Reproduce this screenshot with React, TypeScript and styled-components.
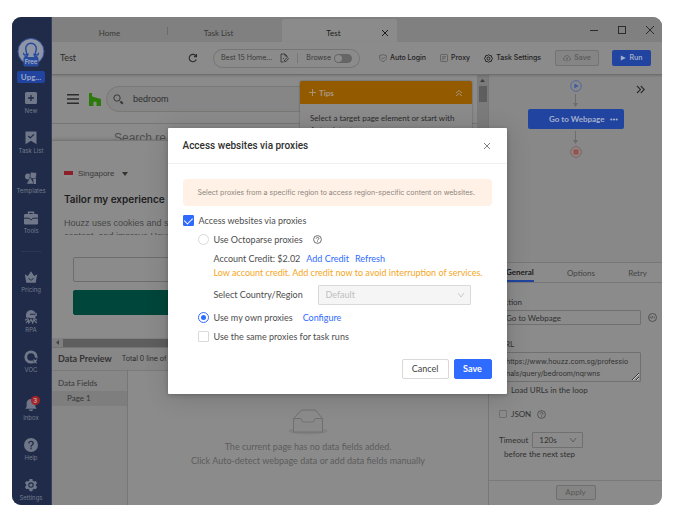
import React from 'react';
import styled, { createGlobalStyle, css } from 'styled-components';

const ui = '"Lato", "Noto Sans", sans-serif';
const small = '"Inter", "Noto Sans", sans-serif';
const site = '"Liberation Sans", Arial, sans-serif';

const c = {
  page: '#8b8b8b',
  bar: '#878787',
  strip: '#808080',
  line: '#787878',
  ink: '#2c2c2c',
  soft: '#454545',
  navy: '#1f2b48',
  navyIcon: '#6f7788',
  blue: '#2044a0',
  orange: '#935a00',
  primary: '#2f6bff',
};

const Global = createGlobalStyle`
  * { box-sizing: border-box; }
  body { margin: 0; background: #fff; font: 9px/12px ${ui}; color: ${c.ink}; }
  button, input, select, textarea { font: inherit; color: inherit; margin: 0; }
  button { cursor: pointer; }
  svg { display: block; flex: none; }
  h1, h2, p { margin: 0; font-weight: inherit; font-size: inherit; }
  a { text-decoration: none; color: inherit; }
`;

const Page = styled.div`
  min-height: 100vh;
  padding: 17px 17px 16px 12px;
  display: grid;
`;
const Window = styled.div`
  position: relative;
  display: grid;
  grid-template-columns: 40px minmax(0, 1fr);
  border-radius: 9px;
  overflow: hidden;
  background: ${c.page};
`;

/* Sidebar */
const Sidebar = styled.nav`
  background: ${c.navy};
  border-right: 1px solid #35405a;
  display: flex;
  flex-direction: column;
  align-items: center;
  gap: 15px;
  padding: 21px 1px 0 0;
  font: 6px/10px ${small};
  color: #737b8c;
`;
const Profile = styled.div`
  display: flex;
  flex-direction: column;
  align-items: center;
  gap: 4px;
  margin-bottom: -7px;
`;
const Upgrade = styled.button`
  border: 0;
  border-radius: 2px;
  background: ${c.blue};
  color: #9aa6c4;
  width: 28px;
  height: 12px;
  padding: 0;
  font: 700 8px/12px ${ui};
`;
const SideLink = styled.a<{ $spaced?: boolean }>`
  position: relative;
  display: flex;
  flex-direction: column;
  align-items: center;
  gap: 1px;
  ${p => p.$spaced && css`margin-top: 8px;`}
`;
const SideRule = styled.hr`
  width: 20px;
  height: 1px;
  border: 0;
  margin: 0 0 3px;
  background: #2b3753;
`;
const Badge = styled.span`
  position: absolute;
  top: -2px;
  right: -1px;
  width: 9px;
  height: 9px;
  border-radius: 50%;
  background: #a62226;
  color: #b9a0a2;
  font: 700 6px/9px ${small};
  text-align: center;
`;

/* Top bars */
const Main = styled.div`
  display: flex;
  flex-direction: column;
  min-width: 0;
`;
const TabBar = styled.header`
  display: flex;
  align-items: stretch;
  height: 25px;
  background: ${c.strip};
  padding-top: 2px;
  font: 8px/23px ${ui};
  color: #333;
`;
const WindowTab = styled.button<{ $active?: boolean }>`
  flex: 0 1 115px;
  display: grid;
  grid-template-columns: 12px 1fr 24px;
  align-items: center;
  justify-items: center;
  border: 0;
  padding: 4px 0 0;
  text-align: center;
  background: ${p => (p.$active ? c.page : 'transparent')};
  border-radius: 3px 3px 0 0;
  color: ${p => (p.$active ? '#1c1c1c' : '#383838')};
  & > span { grid-column: 2; line-height: 16px; }
  &:first-child { grid-template-columns: 22px 1fr 22px; }
`;
const TabSeparator = styled.span`
  width: 1px;
  height: 8px;
  align-self: center;
  margin-right: -1px;
  background: #6a6a74;
`;
const WindowControls = styled.div`
  margin-left: auto;
  display: flex;
  gap: 18px;
  align-items: center;
  padding: 0 7px 2px 0;
`;
const IconButton = styled.button`
  border: 0;
  background: none;
  padding: 0;
  display: grid;
  place-items: center;
  color: #2c2c2c;
`;
const Toolbar = styled.div`
  display: flex;
  align-items: center;
  height: 33px;
  padding: 0 11px 0 8px;
  border-bottom: 1px solid #6f6f6f;
  box-shadow: 0 1px 2px rgba(0, 0, 0, 0.15);
  font: 500 7px/10px ${small};
  white-space: nowrap;
  z-index: 1;
`;
const TaskName = styled.h1`
  flex: 0 1 128px;
  font: 9px/12px ${ui};
`;
const AddressPill = styled.div`
  display: flex;
  align-items: center;
  height: 19px;
  margin-left: 15px;
  padding: 0 7px;
  gap: 8px;
  border: 1px solid #757575;
  border-radius: 10px;
  font-weight: 400;
  color: #383838;
`;
const PillRule = styled.span`
  width: 1px;
  height: 10px;
  background: #777;
`;
const Toggle = styled.label`
  display: flex;
  align-items: center;
  gap: 3px;
`;
const Switch = styled.input`
  appearance: none;
  width: 18px;
  height: 9px;
  border-radius: 5px;
  background: #666;
  border: 1px solid #636363;
  display: flex;
  &::after {
    content: '';
    width: 7px;
    height: 7px;
    border-radius: 50%;
    background: ${c.page};
  }
`;
const ToolbarActions = styled.div`
  margin-left: auto;
  display: flex;
  align-items: center;
`;
const ToolLink = styled.button`
  display: flex;
  align-items: center;
  gap: 3px;
  border: 0;
  background: none;
  padding: 0;
  margin-right: 14px;
  color: #222;
`;
const ToolButton = styled.button<{ $primary?: boolean }>`
  display: flex;
  align-items: center;
  justify-content: center;
  gap: 3px;
  height: 16px;
  padding: 0;
  border-radius: 2px;
  font-weight: 600;
  ${p =>
    p.$primary
      ? css`width: 39px; border: 0; background: ${c.blue}; color: #9fabc8;`
      : css`width: 44px; margin-right: 13px; border: 1px solid #737373; background: #858585; color: #5f5f5f;`}
`;

const Workspace = styled.div`
  flex: 1;
  display: grid;
  grid-template-columns: minmax(0, 1fr) 174px;
`;
const LeftColumn = styled.div`
  display: flex;
  flex-direction: column;
  min-width: 0;
`;

/* Embedded site */
const Browser = styled.section`
  position: relative;
  flex: 1;
  display: grid;
  grid-template-columns: minmax(0, 1fr) 11px;
  grid-template-rows: 1fr 9px;
  font-family: ${site};
`;
const Site = styled.div`
  display: flex;
  flex-direction: column;
`;
const SiteHeader = styled.div`
  display: flex;
  align-items: center;
  gap: 10px;
  height: 49px;
  padding: 0 5px 0 15px;
  border-bottom: 1px solid #767676;
`;
const SearchBox = styled.label`
  flex: 1;
  display: flex;
  align-items: center;
  gap: 9px;
  height: 26px;
  margin-left: -5px;
  padding: 0 6px;
  border: 1px solid #777974;
  border-radius: 13px;
  background: #868686;
`;
const SearchInput = styled.input`
  flex: 1;
  min-width: 0;
  border: 0;
  padding: 0;
  background: none;
  outline: 0;
  color: #2e2e2e;
`;
const SearchHeading = styled.h2`
  height: 16px;
  padding: 7px 0 0 62px;
  overflow: hidden;
  font: 12px/14px ${site};
  color: #505050;
  background: #8b8b8b;
`;
const CookiePanel = styled.div`
  flex: 1;
  padding: 27px 12px 0;
  border-top: 1px solid #767676;
  box-shadow: 0 -1px 3px rgba(0, 0, 0, 0.15);
`;
const Region = styled.button`
  display: flex;
  align-items: center;
  gap: 5px;
  border: 0;
  background: none;
  padding: 0;
  font: 8px/12px ${site};
  color: #3a3a3a;
  & > svg:last-child { margin-left: 3px; }
`;
const CookieTitle = styled.h2`
  margin-top: 12px;
  font: 600 10px/14px ${small};
  color: #1d1d1d;
`;
const CookieText = styled.p`
  margin-top: 11px;
  height: 18px;
  overflow: hidden;
  font: 9px/13px ${site};
  color: #464646;
`;
const CookieActions = styled.div`
  display: grid;
  gap: 8px;
  margin: 22px 9px 0;
`;
const CookieButton = styled.button<{ $filled?: boolean }>`
  height: 25px;
  border-radius: 2px;
  border: 1px solid ${p => (p.$filled ? '#00463a' : '#6d6d6d')};
  background: ${p => (p.$filled ? '#00463a' : 'none')};
`;
const ScrollY = styled.div`
  display: flex;
  flex-direction: column;
  align-items: center;
  gap: 4px;
  padding-top: 4px;
  background: #7b7b7b;
`;
const ScrollX = styled.div`
  grid-column: 1 / -1;
  display: flex;
  align-items: center;
  gap: 4px;
  padding-left: 4px;
  background: #7f7f7f;
`;
const Thumb = styled.span<{ $wide?: boolean }>`
  background: #5e5e5e;
  ${p => (p.$wide ? css`width: 300px; height: 8px;` : css`width: 8px; height: 16px;`)}
`;
const Tips = styled.aside`
  position: absolute;
  top: 6px;
  right: 16px;
  width: 172px;
  border-radius: 2px;
  background: ${c.page};
  box-shadow: 0 0 2px rgba(0, 0, 0, 0.4);
`;
const TipsHead = styled.div`
  display: flex;
  align-items: center;
  gap: 3px;
  height: 23px;
  padding: 0 9px;
  border-radius: 2px 2px 0 0;
  background: ${c.orange};
  color: #a89a80;
  font: 700 8px/12px ${ui};
  & > button { margin-left: auto; color: inherit; }
`;
const TipsText = styled.p`
  padding: 8px 10px;
  font: 8px/12px ${ui};
  color: #2a2a2a;
`;

/* Data preview */
const DataPanel = styled.section`
  display: flex;
  flex-direction: column;
  min-height: 158px;
  border-top: 1px solid #747474;
`;
const DataHead = styled.div`
  display: flex;
  align-items: center;
  gap: 10px;
  height: 23px;
  padding: 0 6px;
  border-bottom: 1px solid #7a7a7a;
  background: ${c.bar};
  font: 7px/12px ${small};
  & > h2 { font: 700 9px/12px ${ui}; color: #333; }
`;
const DataBody = styled.div`
  flex: 1;
  display: grid;
  grid-template-columns: 76px 1fr;
`;
const FieldList = styled.div`
  padding-top: 5px;
  border-right: 1px solid #767676;
  background: #878787;
  font: 8px/14px ${ui};
  color: #363636;
`;
const FieldRow = styled.div<{ $child?: boolean }>`
  height: 15px;
  padding-left: ${p => (p.$child ? 15 : 6)}px;
  background: ${p => (p.$child ? '#7e7e7e' : 'none')};
`;
const Empty = styled.div`
  display: flex;
  flex-direction: column;
  align-items: center;
  padding-top: 38px;
  line-height: 14px;
  text-align: center;
  color: #5c5c5c;
  & > p { margin-top: 5px; }
`;

/* Workflow and step settings */
const SidePanel = styled.aside`
  display: flex;
  flex-direction: column;
  border-left: 1px solid #777;
`;
const Flow = styled.div`
  position: relative;
  flex: 1;
  display: flex;
  flex-direction: column;
  align-items: center;
  gap: 2px;
  padding-top: 5px;
  min-height: 187px;
  background: #888;
`;
const Collapse = styled(IconButton)`
  position: absolute;
  top: 10px;
  right: 17px;
`;
const Step = styled.button`
  display: flex;
  align-items: center;
  justify-content: flex-end;
  gap: 5px;
  width: 96px;
  height: 20px;
  padding: 0 6px;
  border: 0;
  border-radius: 2px;
  background: ${c.blue};
  color: #a5afcb;
  font: 700 8px/12px ${ui};
`;
const StepTabs = styled.div`
  display: flex;
  justify-content: space-between;
  height: 21px;
  padding: 0 15px 0 17px;
  border-top: 1px solid #777;
  border-bottom: 1px solid #777;
`;
const StepTab = styled.button<{ $active?: boolean }>`
  border: 0;
  background: none;
  padding: 0;
  font: ${p => (p.$active ? 700 : 400)} 8px/18px ${ui};
  color: ${p => (p.$active ? '#1c1c1c' : '#444')};
  ${p => p.$active && css`border-bottom: 2px solid ${c.blue};`}
`;
const Form = styled.form`
  display: flex;
  flex-direction: column;
  padding: 13px 5px 0 10px;
  font: 8px/12px ${ui};
  color: #303030;
`;
const InputRow = styled.div`
  display: flex;
  align-items: center;
  justify-content: space-between;
  margin: 2px 0 13px;
`;
const TextInput = styled.input`
  width: 142px;
  height: 15px;
  padding: 0 6px;
  border: 1px solid #707070;
  border-radius: 1px;
  background: none;
`;
const UrlArea = styled.textarea`
  width: 142px;
  height: 30px;
  margin-top: 2px;
  padding: 3px 11px 3px 6px;
  border: 1px solid #707070;
  border-radius: 1px;
  background: none;
  font: 7px/12px ${small};
  word-break: break-all;
  overflow: hidden;
  resize: vertical;
`;
const FormCheck = styled.div<{ $last?: boolean }>`
  display: flex;
  align-items: center;
  gap: 4px;
  margin-top: ${p => (p.$last ? 12 : 2)}px;
  & > label { display: flex; align-items: center; gap: 4px; }
  & > svg { margin-left: 2px; color: #484848; }
`;
const DimCheck = styled.input`
  appearance: none;
  width: 8px;
  height: 8px;
  border: 1px solid #707070;
  border-radius: 1px;
`;
const TimeoutRow = styled.label`
  display: flex;
  align-items: center;
  gap: 4px;
  margin-top: 12px;
`;
const SelectWrap = styled.span<{ $wide?: boolean }>`
  display: grid;
  align-items: center;
  ${p => (p.$wide ? css`width: 153px;` : css`width: 51px;`)}
  & > * { grid-area: 1 / 1; }
  & > svg { justify-self: end; margin-right: 6px; pointer-events: none; color: #505050; }
`;
const DimSelect = styled.select`
  appearance: none;
  height: 16px;
  padding: 0 6px;
  border: 1px solid #707070;
  border-radius: 1px;
  background: none;
`;
const FormNote = styled.p`
  padding-left: 5px;
`;
const FormFoot = styled.div`
  display: grid;
  place-items: center;
  height: 25px;
  margin-top: 20px;
  border-top: 1px solid #7a7a7a;
  padding-bottom: 2px;
`;
const Apply = styled.button`
  width: 40px;
  height: 15px;
  padding: 0;
  border: 1px solid #6f6f6f;
  border-radius: 2px;
  background: #858585;
  color: #585858;
  font: 8px/12px ${ui};
`;

/* Proxy dialog */
const Overlay = styled.div`
  position: absolute;
  inset: 0;
  z-index: 2;
  display: grid;
  place-items: center;
`;
const Dialog = styled.div`
  width: min(339px, 100%);
  background: #fff;
  border-radius: 1px;
  box-shadow: 0 3px 24px rgba(0, 0, 0, 0.16), 0 1px 4px rgba(0, 0, 0, 0.2);
  color: #4d4d4d;
`;
const DialogHead = styled.div`
  display: flex;
  align-items: center;
  justify-content: space-between;
  height: 36px;
  padding: 0 16px 0 15px;
  border-bottom: 1px solid #f0f0f0;
  & > h2 { font: 500 10px/14px "Roboto", ${ui}; color: #303030; }
  & > button { color: #808080; }
`;
const DialogBody = styled.div`
  padding: 15px 15px 0;
`;
const Notice = styled.p`
  height: 27px;
  margin-bottom: 5px;
  padding: 0 15px;
  border-radius: 4px;
  background: #fff1e5;
  font: 7px/28px ${small};
  color: #8c8680;
  white-space: nowrap;
`;
const Option = styled.div<{ $indent?: boolean }>`
  display: flex;
  align-items: center;
  gap: 10px;
  height: 19px;
  padding-left: ${p => (p.$indent ? 15 : 0)}px;
  & > label { display: flex; align-items: center; gap: 5px; }
`;
const Check = styled.input`
  appearance: none;
  display: grid;
  place-content: center;
  width: 11px;
  height: 11px;
  border: 1px solid #d9d9d9;
  border-radius: 1px;
  background: #fff;
  &:checked { background: ${c.primary}; border-color: ${c.primary}; }
  &:checked::after {
    content: '';
    width: 4px;
    height: 7px;
    margin-bottom: 2px;
    border: solid #fff;
    border-width: 0 1px 1px 0;
    transform: rotate(45deg);
  }
`;
const Radio = styled.input`
  appearance: none;
  display: grid;
  place-content: center;
  width: 11px;
  height: 11px;
  border: 1px solid #d9d9d9;
  border-radius: 50%;
  &:checked { border-color: ${c.primary}; }
  &:checked::after {
    content: '';
    width: 5px;
    height: 5px;
    border-radius: 50%;
    background: ${c.primary};
  }
`;
const Credit = styled.div`
  display: flex;
  align-items: center;
  gap: 6px;
  height: 19px;
  padding-left: 31px;
`;
const Link = styled.a`
  color: ${c.primary};
`;
const Warning = styled.p`
  padding-left: 31px;
  line-height: 10px;
  color: #f5a61d;
  white-space: nowrap;
`;
const CountryRow = styled.label`
  display: flex;
  align-items: center;
  justify-content: space-between;
  margin: 7px 0 3px;
  padding: 0 21px 0 31px;
`;
const CountrySelect = styled.select`
  appearance: none;
  height: 20px;
  padding: 0 7px;
  border: 1px solid #d9d9d9;
  border-radius: 1px;
  background: #f5f5f5;
  color: #bfbfbf;
  opacity: 1;
  & + svg { color: #bfbfbf; }
`;
const DialogFoot = styled.div`
  display: flex;
  justify-content: flex-end;
  gap: 5px;
  padding: 13px 15px 15px;
`;
const DialogButton = styled.button<{ $primary?: boolean }>`
  height: 20px;
  padding: 0;
  border-radius: 2px;
  ${p =>
    p.$primary
      ? css`width: 38px; border: 1px solid ${c.primary}; background: ${c.primary}; color: #fff; font-weight: 700;`
      : css`width: 47px; border: 1px solid #d9d9d9; background: #fff; color: #444;`}
`;

/* Icons */
type G = { w: number; h?: number; vb: string; s?: number; fill?: string; color?: string; children: React.ReactNode };
const Svg = ({ w, h = w, vb, s = 1, fill = 'none', color, children }: G) => (
  <svg width={w} height={h} viewBox={vb} fill={fill} stroke={fill === 'none' ? 'currentColor' : 'none'} strokeWidth={s} color={color} aria-hidden="true">
    {children}
  </svg>
);
const Cross = ({ size = 8 }: { size?: number }) => (
  <Svg w={size} vb="0 0 8 8"><path d="M1 1l6 6M7 1l-6 6" /></Svg>
);
const Chevron = () => (
  <Svg w={8} vb="0 0 8 8" s={0.8}><path d="M1 2l3 4 3-4" /></Svg>
);
const HelpMark = () => (
  <Svg w={9} vb="0 0 9 9" s={0.8}>
    <circle cx="4.5" cy="4.5" r="3.9" />
    <path d="M3.2 3.7c0-1.7 2.7-1.7 2.7-.1 0 .9-1.4 1-1.4 2M4.5 6.3v.8" />
  </Svg>
);

const I = (children: React.ReactNode) => (
  <Svg w={14} vb="0 0 14 14" fill={c.navyIcon}>{children}</Svg>
);
const dark = c.navy;
const items = {
  New: I(<><rect x="1" y="1" width="12" height="12" rx="1.5" /><path d="M7 4v6M4 7h6" stroke={dark} strokeWidth="1.3" /></>),
  'Task List': I(<><path d="M1.5.5h11v12.7L7 9.8l-5.5 3.4z" /><path d="M4.3 5l2 2 3.6-3.6" stroke={dark} strokeWidth="1.2" fill="none" /></>),
  Templates: I(<><circle cx="4" cy="5.5" r="3" /><path d="M6.5 1l6.2.8-.8 6.2-6-.8z" stroke={dark} strokeWidth=".6" /><path d="M6.3 6l3.8 7H2.5z" stroke={dark} strokeWidth=".5" /><path d="M9 8h3v5H9.8z" /></>),
  Tools: I(<><path d="M4.5 3.5V1.3h5v2.2" fill="none" stroke={c.navyIcon} strokeWidth="1.4" /><rect x="0" y="3" width="14" height="10.5" rx="1.3" /><path d="M0 7.2h5M9 7.2h5M5.5 7c0 2.3 3 2.3 3 0" fill="none" stroke={dark} /></>),
  Pricing: I(<><path d="M.8 4.2l3 1.9L7 1.2l3.2 4.9 3-1.9-1.5 8.6H2.3z" /><path d="M4.8 8c.5 2.7 3.9 2.7 4.4 0" fill="none" stroke={dark} /></>),
  RPA: I(<><path d="M2 7.5V5a5 5 0 019.4-2.3l1.4.3v3l-1.4.2v2.3z" /><path d="M6 4.3h5.5" stroke={dark} strokeWidth="1.1" /><path d="M2 13l2.5-3.2L4.8 13l2.2-3.7L8.7 13l.8-3.3L12.7 13M1 10.3l3-1.7M13 10.3l-3-1.7" stroke={c.navyIcon} strokeWidth="1.2" fill="none" /></>),
  VOC: I(<><circle cx="7" cy="7" r="5.2" fill="none" stroke={c.navyIcon} strokeWidth="2.8" /><path d="M8 7.6l5 .2-1.6 4.8-2-.5z" fill={dark} /><path d="M9.2 9.3l4.2 1.3-1.5.8 1.2 1.5-1 .8-1.2-1.4-.8 1.3z" /></>),
  Inbox: I(<><path d="M7 1a4.3 4.3 0 014.4 4.4v3.4l1.3 2H1.3l1.3-2V5.4A4.3 4.3 0 017 1zM4.8 11.6h4.4c-.6 2-3.8 2-4.4 0z" /></>),
  Help: I(<><circle cx="7" cy="7" r="7" /><path d="M4.8 5.5c0-2.8 4.4-2.7 4.4-.1 0 1.6-2.2 1.6-2.2 3.3M7 9.6v1.6" fill="none" stroke={dark} strokeWidth="1.3" /></>),
  Settings: I(<><path d="M5.6 1h2.8l.4 1.8 1.2.7 1.8-.6 1.3 2.4-1.3 1.3v1l1.3 1.3-1.3 2.4-1.8-.6-1.2.7-.4 1.8H5.6l-.4-1.8-1.2-.7-1.8.6L.9 8.9l1.3-1.3v-1L.9 5.3l1.3-2.4 1.8.6 1.2-.7z" /><circle cx="7" cy="7.1" r="2.2" fill="none" stroke={dark} strokeWidth="1.1" /></>),
};
type ItemName = keyof typeof items;
const SideItem = ({ name, spaced, badge }: { name: ItemName; spaced?: boolean; badge?: string }) => (
  <SideLink href="#" $spaced={spaced}>
    {items[name]}
    {name}
    {badge && <Badge>{badge}</Badge>}
  </SideLink>
);

const Avatar = () => (
  <svg width="28" height="29" viewBox="0 0 28 29" role="img" aria-label="Free plan">
    <circle cx="14" cy="13.5" r="13" fill="#8e95a5" stroke="#35529a" />
    <path
      d="M9.5 17c.8-1.5-.8-4-.8-6.5a5.3 5.3 0 0110.6 0c0 2.5-1.600 5-.8 6.500M9.500 16.500c-1.800 1.300-3.500-.4-2.700-1.700M18.500 16.500c1.800 1.300 3.500-.4 2.700-1.700M11 15.500c0 2-1.500 3.500-3.500 3.500M17 15.500c0 2 1.500 3.500 3.500 3.500"
      fill="none"
      stroke="#2448a0"
      strokeWidth="1.4"
    />
    <rect x="6.5" y="19" width="15" height="9.5" rx="1.5" fill="#2a4c9e" />
    <text x="14" y="26" textAnchor="middle" fontSize="6" fontWeight="600" fontFamily="Inter, sans-serif" fill="#a3aec8">Free</text>
  </svg>
);

const Arrow = ({ h }: { h: number }) => (
  <Svg w={5} h={h} vb={`0 0 5 ${h}`} color="#6d6d6d">
    <path d={`M2.5 0v${h - 3}`} /><path d={`M0 ${h - 4}h5l-2.5 4z`} fill="#6d6d6d" stroke="none" />
  </Svg>
);

export default function App() {
  return (
    <Page>
      <Global />
      <Window>
        <Sidebar>
          <Profile>
            <Avatar />
            <Upgrade>Upg...</Upgrade>
          </Profile>
          <SideItem name="New" />
          <SideItem name="Task List" />
          <SideItem name="Templates" />
          <SideItem name="Tools" />
          <SideRule />
          <SideItem name="Pricing" />
          <SideItem name="RPA" />
          <SideItem name="VOC" />
          <SideItem name="Inbox" spaced badge="3" />
          <SideItem name="Help" />
          <SideItem name="Settings" />
        </Sidebar>

        <Main>
          <TabBar>
            <WindowTab><span>Home</span></WindowTab>
            <TabSeparator />
            <WindowTab><span>Task List</span></WindowTab>
            <WindowTab $active>
              <span>Test</span>
              <Cross />
            </WindowTab>
            <WindowControls>
              <IconButton aria-label="Minimize"><Svg w={10} vb="0 0 10 10"><path d="M1 5.5h8" /></Svg></IconButton>
              <IconButton aria-label="Maximize"><Svg w={10} vb="0 0 10 10"><rect x="1.5" y="1.5" width="7" height="7" /></Svg></IconButton>
              <IconButton aria-label="Close"><Svg w={10} vb="0 0 10 10"><path d="M1 1l8 8M9 1L1 9" /></Svg></IconButton>
            </WindowControls>
          </TabBar>

          <Toolbar>
            <TaskName>Test</TaskName>
            <IconButton aria-label="Reload">
              <Svg w={10} vb="0 0 10 10" s={1.1}><path d="M8.3 6.5A3.7 3.7 0 118 3M8.5 1v2.6H6" /></Svg>
            </IconButton>
            <AddressPill>
              Best 15 Home...
              <Svg w={9} h={10} vb="0 0 9 10" s={0.9}><path d="M3.5 9H1V1h4l2 2v1M5 1v2h2M3 5.5h1M4.5 7l3-2.5 1 1-2.5 3H4.5z" /></Svg>
              <PillRule />
              <Toggle>Browse<Switch type="checkbox" role="switch" /></Toggle>
            </AddressPill>
            <ToolbarActions>
              <ToolLink>
                <Svg w={8} vb="0 0 8 8" s={0.7} color="#555"><path d="M4 .5c1 .7 2 .9 3.3.9v2.8C7.3 6 5.5 7 4 7.600 2.500 7 .7 6 .7 4.200V1.400C2 1.400 3 1.200 4 .5zM2.500 3.800l1.200 1.200 2-2" /></Svg>
                Auto Login
              </ToolLink>
              <ToolLink>
                <Svg w={8} vb="0 0 8 8" s={0.7} color="#555"><rect x=".5" y=".5" width="7" height="7" rx=".8" /><path d="M2 2.700h4M2 4.200h3.500M2 5.700h1.500" /></Svg>
                Proxy
              </ToolLink>
              <ToolLink>
                <Svg w={9} vb="0 0 9 9" s={1}><path d="M4.500.7l1.200.8 1.500.1.500 1.500.8 1.400-.8 1.400-.5 1.500-1.500.1-1.200.8-1.200-.8-1.500-.1-.5-1.500-.8-1.400.8-1.400.5-1.500 1.500-.1z" /><circle cx="4.500" cy="4.500" r="1.500" /></Svg>
                Task Settings
              </ToolLink>
              <ToolButton disabled>
                <Svg w={8} vb="0 0 8 8" s={0.8}><path d="M2.500 6.500H1.800a1.600 1.600 0 01-.3-3.100 2.600 2.600 0 015 0 1.600 1.600 0 01-.3 3.100h-.7M4 7.500V4M2.800 5L4 3.800 5.200 5" /></Svg>
                Save
              </ToolButton>
              <ToolButton $primary>
                <Svg w={6} vb="0 0 6 6" fill="#a3afcc"><path d="M.8.5l5 2.5-5 2.500z" /></Svg>
                Run
              </ToolButton>
            </ToolbarActions>
          </Toolbar>

          <Workspace>
            <LeftColumn>
              <Browser>
                <Site>
                  <SiteHeader>
                    <IconButton aria-label="Menu"><Svg w={12} vb="0 0 12 12" s={1.5}><path d="M0 1.700h12M0 6h12M0 10.300h12" /></Svg></IconButton>
                    <Svg w={12} h={13} vb="0 0 12 13" fill="#2b7a0b"><path d="M0 0h3v3.500l9 2.600V13H7.500V8.800h-3V13H0z" /></Svg>
                    <SearchBox>
                      <Svg w={11} vb="0 0 11 11" s={1} color="#3a3a3a"><circle cx="4" cy="4" r="3.200" /><path d="M6.300 6.300L7.500 7.500" /><path d="M7.500 7.500l2.300 2.300" strokeWidth="2.200" /></Svg>
                      <SearchInput aria-label="Search" defaultValue="bedroom" />
                    </SearchBox>
                  </SiteHeader>
                  <SearchHeading>Search re</SearchHeading>
                  <CookiePanel>
                    <Region>
                      <Svg w={9} h={7} vb="0 0 9 7" fill="#8f8f8f"><rect width="9" height="7" /><rect width="9" height="4" fill="#8d1f2a" /></Svg>
                      Singapore
                      <Svg w={6} h={4} vb="0 0 6 4" fill="#333"><path d="M0 0h6L3 4z" /></Svg>
                    </Region>
                    <CookieTitle>Tailor my experience</CookieTitle>
                    <CookieText>Houzz uses cookies and si<br />content, and improve Houz</CookieText>
                    <CookieActions>
                      <CookieButton aria-label="Manage preferences" />
                      <CookieButton $filled aria-label="Accept" />
                    </CookieActions>
                  </CookiePanel>
                </Site>
                <ScrollY>
                  <Svg w={5} h={3} vb="0 0 5 3" fill="#3c3c3c"><path d="M0 3h5L2.500 0z" /></Svg>
                  <Thumb />
                </ScrollY>
                <ScrollX>
                  <Svg w={3} h={5} vb="0 0 3 5" fill="#444"><path d="M3 0v5L0 2.500z" /></Svg>
                  <Thumb $wide />
                </ScrollX>
                <Tips>
                  <TipsHead>
                    <Svg w={7} vb="0 0 7 7" s={0.9}><path d="M3.500 0v7M0 3.500h7" /></Svg>
                    Tips
                    <IconButton aria-label="Collapse tips"><Svg w={8} vb="0 0 8 8" s={0.9}><path d="M1 4L4 1.500 7 4M1 7L4 4.500 7 7" /></Svg></IconButton>
                  </TipsHead>
                  <TipsText>Select a target page element or start with Auto-detect</TipsText>
                </Tips>
              </Browser>

              <DataPanel>
                <DataHead>
                  <h2>Data Preview</h2>
                  Total 0 line of data
                </DataHead>
                <DataBody>
                  <FieldList>
                    <FieldRow>Data Fields</FieldRow>
                    <FieldRow $child>Page 1</FieldRow>
                  </FieldList>
                  <Empty>
                    <Svg w={40} h={26} vb="0 0 40 26" color="#707070">
                      <ellipse cx="20" cy="22" rx="19.500" ry="3.500" fill="#818181" stroke="none" />
                      <path d="M5.500 9.500L13.500 1h14l7 8.500" fill={c.page} />
                      <path d="M5.500 9.500h7.500c1 0 .7 3.500 2 3.500h10c1.300 0 1-3.500 2-3.500h7.500v13.500h-29z" fill="#898989" />
                    </Svg>
                    <p>The current page has no data fields added.<br />Click Auto-detect webpage data or add data fields manually</p>
                  </Empty>
                </DataBody>
              </DataPanel>
            </LeftColumn>

            <SidePanel>
              <Flow>
                <Svg w={12} vb="0 0 12 12" color="#5068a0"><circle cx="6" cy="6" r="5.300" /><path d="M4.300 3.500L8.800 6 4.300 8.500z" fill="#3f5ca5" stroke="none" /></Svg>
                <Arrow h={13} />
                <Step>
                  Go to Webpage
                  <Svg w={8} h={3} vb="0 0 8 3" fill="#a5afcb"><circle cx="1.300" cy="1.500" r="1.100" /><circle cx="4" cy="1.500" r="1.100" /><circle cx="6.700" cy="1.500" r="1.100" /></Svg>
                </Step>
                <Arrow h={13} />
                <Svg w={12} vb="0 0 12 12" color="#90605f"><circle cx="6" cy="6" r="5.300" /><rect x="3.500" y="3.500" width="5" height="5" fill="#98504c" stroke="none" /></Svg>
                <Collapse aria-label="Collapse panel"><Svg w={9} vb="0 0 9 9" s={1.1}><path d="M1 1l3.500 3.500L1 8M4.800 1l3.500 3.500L4.800 8" /></Svg></Collapse>
              </Flow>
              <StepTabs>
                <StepTab $active>General</StepTab>
                <StepTab>Options</StepTab>
                <StepTab>Retry</StepTab>
              </StepTabs>
              <Form>
                <label htmlFor="action">Action</label>
                <InputRow>
                  <TextInput id="action" defaultValue="Go to Webpage" />
                  <Svg w={9} vb="0 0 9 9" s={0.8} color="#444"><circle cx="4.500" cy="4.500" r="4" /><path d="M1.500 5.500l.9-2 .8 2M4 5.500v-2h1v1H4M6.500 3.500v2" strokeWidth=".5" /></Svg>
                </InputRow>
                <label htmlFor="url">URL</label>
                <UrlArea id="url" spellCheck={false} defaultValue="https://www.houzz.com.sg/professionals/query/bedroom/nqrwns" />
                <FormCheck>
                  <label><DimCheck type="checkbox" />Load URLs in the loop</label>
                </FormCheck>
                <FormCheck $last>
                  <label><DimCheck type="checkbox" />JSON</label>
                  <HelpMark />
                </FormCheck>
                <TimeoutRow>
                  Timeout
                  <SelectWrap>
                    <DimSelect defaultValue="120s"><option>120s</option></DimSelect>
                    <Chevron />
                  </SelectWrap>
                </TimeoutRow>
                <FormNote>before the next step</FormNote>
              </Form>
              <FormFoot><Apply disabled>Apply</Apply></FormFoot>
            </SidePanel>
          </Workspace>
        </Main>

        <Overlay>
          <Dialog role="dialog" aria-labelledby="proxy-title">
            <DialogHead>
              <h2 id="proxy-title">Access websites via proxies</h2>
              <IconButton aria-label="Close dialog"><Cross /></IconButton>
            </DialogHead>
            <DialogBody>
              <Notice>Select proxies from a specific region to access region-specific content on websites.</Notice>
              <Option>
                <label><Check type="checkbox" defaultChecked />Access websites via proxies</label>
              </Option>
              <Option $indent>
                <label><Radio type="radio" name="proxy" />Use Octoparse proxies</label>
                <HelpMark />
              </Option>
              <Credit>
                Account Credit: $2.02
                <Link href="#">Add Credit</Link>
                <Link href="#">Refresh</Link>
              </Credit>
              <Warning>Low account credit. Add credit now to avoid interruption of services.</Warning>
              <CountryRow>
                Select Country/Region
                <SelectWrap $wide>
                  <CountrySelect disabled defaultValue="Default"><option>Default</option></CountrySelect>
                  <Chevron />
                </SelectWrap>
              </CountryRow>
              <Option $indent>
                <label><Radio type="radio" name="proxy" defaultChecked />Use my own proxies</label>
                <Link href="#">Configure</Link>
              </Option>
              <Option $indent>
                <label><Check type="checkbox" />Use the same proxies for task runs</label>
              </Option>
            </DialogBody>
            <DialogFoot>
              <DialogButton>Cancel</DialogButton>
              <DialogButton $primary>Save</DialogButton>
            </DialogFoot>
          </Dialog>
        </Overlay>
      </Window>
    </Page>
  );
}
